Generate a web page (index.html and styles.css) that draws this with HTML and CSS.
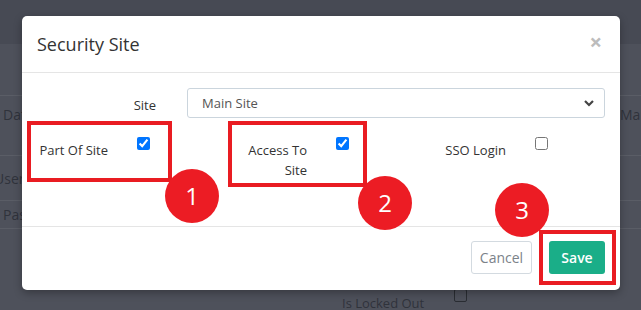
FILE: index.html
```html
<!DOCTYPE html>
<html lang="en">
<head>
  <meta charset="UTF-8">
  <title>Security Site</title>
  <link rel="stylesheet" href="styles.css">
</head>
<body>

<!-- page behind the dialog -->
<div class="page">
  <div class="topbar"></div>
  <div class="page-row spacer"></div>
  <div class="page-row tall">
    <span class="left">Date Created</span>
    <span class="right">Manager</span>
  </div>
  <div class="page-row user"><span class="left shift">Username</span></div>
  <div class="page-row pass"><span class="left">Password</span></div>
  <div class="page-row locked">
    <span class="locked-label">Is Locked Out</span>
    <span class="fake-check"></span>
  </div>
</div>

<!-- dialog -->
<div class="modal">
  <div class="modal-header">
    <h3 class="modal-title">Security Site</h3>
    <span class="close">&times;</span>
  </div>

  <div class="modal-body">
    <div class="site-row">
      <label class="site-label">Site</label>
      <div class="select">
        <span>Main Site</span>
        <svg class="chevron" width="10" height="8" viewBox="0 0 10 8">
          <path d="M1 2 L5 6 L9 2" fill="none" stroke="#444" stroke-width="2.2"/>
        </svg>
      </div>
    </div>

    <div class="check-row">
      <div class="check-group">
        <label class="check-label">Part Of Site</label>
        <input type="checkbox" checked>
      </div>
      <div class="check-group">
        <label class="check-label">Access To Site</label>
        <input type="checkbox" checked>
      </div>
      <div class="check-group">
        <label class="check-label">SSO Login</label>
        <input type="checkbox">
      </div>
    </div>
  </div>

  <div class="modal-footer">
    <button class="btn btn-cancel">Cancel</button>
    <button class="btn btn-save">Save</button>
  </div>
</div>

<!-- annotations -->
<div class="mark mark-1"></div>
<div class="mark mark-2"></div>
<div class="mark mark-3"></div>
<div class="step step-1">1</div>
<div class="step step-2">2</div>
<div class="step step-3">3</div>

</body>
</html>
```

FILE: styles.css
```css
body {
  margin: 0;
  width: 641px;
  height: 310px;
  overflow: hidden;
  font-family: 'Open Sans', 'Liberation Sans', sans-serif;
  background-color: #4e515b;
  position: relative;
}

/* background page */
.page {
  display: flex;
  flex-direction: column;
  color: #30333b;
  font-size: 14px;
  line-height: 20px;
  height: 310px;
  overflow: hidden;
}
.topbar {
  height: 44px;
  flex-shrink: 0;
  background-color: #474a54;
}
.page-row {
  position: relative;
  flex-shrink: 0;
  border-bottom: 1px solid #5a5d66;
  box-sizing: border-box;
}
.spacer {
  height: 52px;
}
.tall {
  height: 60px;
  padding-top: 9px;
}
.user {
  height: 45px;
  padding-top: 13px;
}
.pass {
  height: 28px;
  padding-top: 4px;
}
.locked {
  height: 81px;
  border-bottom: none;
  padding-top: 64px;
  padding-left: 342px;
  display: flex;
  align-items: flex-start;
}
.left {
  display: block;
  margin-left: 3px;
  white-space: nowrap;
}
.shift {
  margin-left: -6px;
}
.right {
  position: absolute;
  left: 620px;
  top: 9px;
  white-space: nowrap;
}
.locked-label {
  font-size: 13px;
}
.fake-check {
  width: 11px;
  height: 11px;
  border: 1px solid #2a2d33;
  border-radius: 2px;
  margin-left: 30px;
  margin-top: -4px;
}

/* dialog */
.modal {
  position: absolute;
  left: 22px;
  top: 16px;
  width: 598px;
  height: 274px;
  background: white;
  border-radius: 5px;
  box-shadow: 0 3px 9px rgba(0,0,0,0.3);
  display: flex;
  flex-direction: column;
}
.modal-header {
  height: 56px;
  border-bottom: 1px solid #e5e5e5;
  padding: 0 15px;
  display: flex;
  align-items: center;
  justify-content: space-between;
}
.modal-title {
  margin: 0;
  font-size: 18px;
  font-weight: 400;
  color: #333;
}
.close {
  font-size: 22px;
  font-weight: 700;
  color: #bcbcbc;
  margin-top: -7px;
  margin-right: 3px;
}
.modal-body {
  height: 153px;
  padding: 15px 15px 0;
  box-sizing: border-box;
  font-size: 13px;
  line-height: 20px;
  color: #333;
}
.site-row {
  display: flex;
  align-items: flex-start;
}
.site-label {
  width: 119px;
  text-align: right;
  padding-top: 7px;
  margin-right: 31px;
}
.select {
  flex: 1;
  height: 30px;
  box-sizing: border-box;
  border: 1px solid #cbd5dd;
  border-radius: 3px;
  padding: 0 10px 0 14px;
  display: flex;
  align-items: center;
  justify-content: space-between;
  color: #555;
}
.check-row {
  display: flex;
  margin-top: 12px;
}
.check-group {
  width: 199px;
  flex-shrink: 0;
  display: flex;
  align-items: flex-start;
}
.check-label {
  width: 71px;
  text-align: right;
  padding-top: 10px;
}
.check-group input {
  margin: 7px 0 0 29px;
  width: 13px;
  height: 13px;
}
.modal-footer {
  flex: 1;
  border-top: 1px solid #e5e5e5;
  padding: 0 15px;
  display: flex;
  align-items: center;
  justify-content: flex-end;
  gap: 17px;
}
.btn {
  height: 33px;
  font-family: inherit;
  font-size: 14px;
  border-radius: 3px;
  cursor: pointer;
  margin-top: -2px;
}
.btn-cancel {
  width: 61px;
  background: white;
  border: 1px solid #d3dae0;
  color: #7b8289;
}
.btn-save {
  width: 56px;
  background-color: #1aae88;
  border: none;
  color: white;
  font-weight: 600;
}

/* red annotations */
.mark {
  position: absolute;
  border: 4px solid #e91c22;
  box-sizing: border-box;
}
.mark-1 {
  left: 27px;
  top: 121px;
  width: 145px;
  height: 61px;
}
.mark-2 {
  left: 228px;
  top: 121px;
  width: 139px;
  height: 66px;
}
.mark-3 {
  left: 539px;
  top: 230px;
  width: 77px;
  height: 55px;
}
.step {
  position: absolute;
  width: 54px;
  height: 54px;
  border-radius: 50%;
  background-color: #ec1c24;
  color: white;
  font-size: 24px;
  line-height: 54px;
  text-align: center;
}
.step-1 {
  left: 165px;
  top: 169px;
}
.step-2 {
  left: 358px;
  top: 176px;
}
.step-3 {
  left: 495px;
  top: 183px;
}
```
